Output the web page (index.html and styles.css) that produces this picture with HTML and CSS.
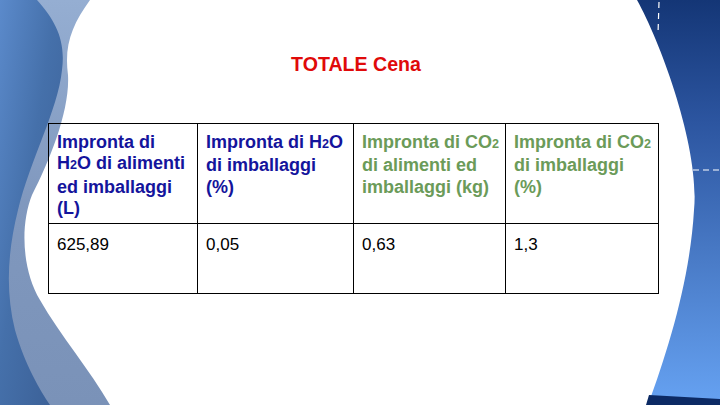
FILE: index.html
```html
<!DOCTYPE html>
<html lang="it">
<head>
<meta charset="utf-8">
<title>TOTALE Cena</title>
<link rel="stylesheet" href="styles.css">
</head>
<body>
<div class="slide">
  <svg class="deco" width="720" height="405" viewBox="0 0 720 405" aria-hidden="true">
    <defs>
      <linearGradient id="gLight" x1="0" y1="0" x2="0" y2="1">
        <stop offset="0" stop-color="#95aed2"/>
        <stop offset="0.5" stop-color="#8098be"/>
        <stop offset="1" stop-color="#7a92b8"/>
      </linearGradient>
      <linearGradient id="gDark" x1="0" y1="0" x2="1" y2="1">
        <stop offset="0" stop-color="#5b8acb"/>
        <stop offset="0.45" stop-color="#4570aa"/>
        <stop offset="1" stop-color="#3a5e94"/>
      </linearGradient>
      <linearGradient id="gRight" x1="0" y1="0" x2="0" y2="1">
        <stop offset="0" stop-color="#143676"/>
        <stop offset="0.3" stop-color="#2c55a0"/>
        <stop offset="0.65" stop-color="#4a7cc8"/>
        <stop offset="1" stop-color="#66a2f2"/>
      </linearGradient>
    </defs>
    <path d="M0,0 L90,0 C72,25 64,45 68,75 C70,110 50,160 32,195 C20,225 22,270 40,300 C60,335 90,370 110,405 L0,405 Z" fill="url(#gLight)"/>
    <path d="M0,0 L37,0 C55,20 66,40 62,70 C58,110 30,160 18,210 C8,250 5,290 15,330 C25,365 40,390 50,405 L0,405 Z" fill="url(#gDark)"/>
    <path d="M637,0 C662,45 700,150 694,210 C690,280 668,350 648,405 L720,405 L720,0 Z" fill="url(#gRight)"/>
    <path d="M649,395 L720,399 L720,405 L646,405 Z" fill="#0c2a64"/>
    <path d="M659,2 L658,34" stroke="#ffffff" stroke-width="1.2" stroke-dasharray="6,5"/>
    <path d="M693,170 L720,170" stroke="#ffffff" stroke-width="1.2" stroke-dasharray="6,4"/>
  </svg>

  <div class="content">
    <h1 class="title">TOTALE Cena</h1>
    <table class="data">
      <colgroup>
        <col class="c1"><col class="c2"><col class="c3"><col class="c4">
      </colgroup>
      <tr class="head">
        <td class="blue">Impronta di<br>H<span class="sub">2</span>O di alimenti<br>ed imballaggi<br>(L)</td>
        <td class="blue">Impronta di H<span class="sub">2</span>O<br>di imballaggi<br>(%)</td>
        <td class="green">Impronta di CO<span class="sub">2</span><br>di alimenti ed<br>imballaggi (kg)</td>
        <td class="green">Impronta di CO<span class="sub">2</span><br>di imballaggi<br>(%)</td>
      </tr>
      <tr class="body">
        <td>625,89</td>
        <td>0,05</td>
        <td>0,63</td>
        <td>1,3</td>
      </tr>
    </table>
  </div>
</div>
</body>
</html>
```

FILE: styles.css
```css
html, body {
  margin: 0;
  padding: 0;
  background: #ffffff;
}

.slide {
  position: relative;
  width: 720px;
  height: 405px;
  overflow: hidden;
  background: #ffffff;
  font-family: "Liberation Sans", Arial, sans-serif;
}

.deco {
  position: absolute;
  left: 0;
  top: 0;
}

.content {
  position: relative;
  padding: 53px 0 0 48px;
}

.title {
  margin: 0;
  width: 616px;
  text-align: center;
  font-size: 19.6px;
  line-height: 22.5px;
  font-weight: bold;
  color: #e00a0a;
}

.data {
  margin-top: 47px;
  border-collapse: collapse;
  table-layout: fixed;
  width: 610px;
}

.c1 { width: 149px; }
.c2 { width: 156px; }
.c3 { width: 152px; }
.c4 { width: 153px; }

.data td {
  border: 1px solid #000000;
  vertical-align: top;
  padding: 8px 0 0 8px;
  font-size: 18px;
  line-height: 21.6px;
  white-space: nowrap;
  overflow: hidden;
}

.head td {
  height: 91px;
  font-weight: bold;
}

.body td {
  height: 59px;
  color: #000000;
  padding-top: 10px;
  font-size: 17px;
}

.sub {
  font-size: 0.7em;
}

.blue { color: #14149c; }
.green { color: #6b9b59; }
```
